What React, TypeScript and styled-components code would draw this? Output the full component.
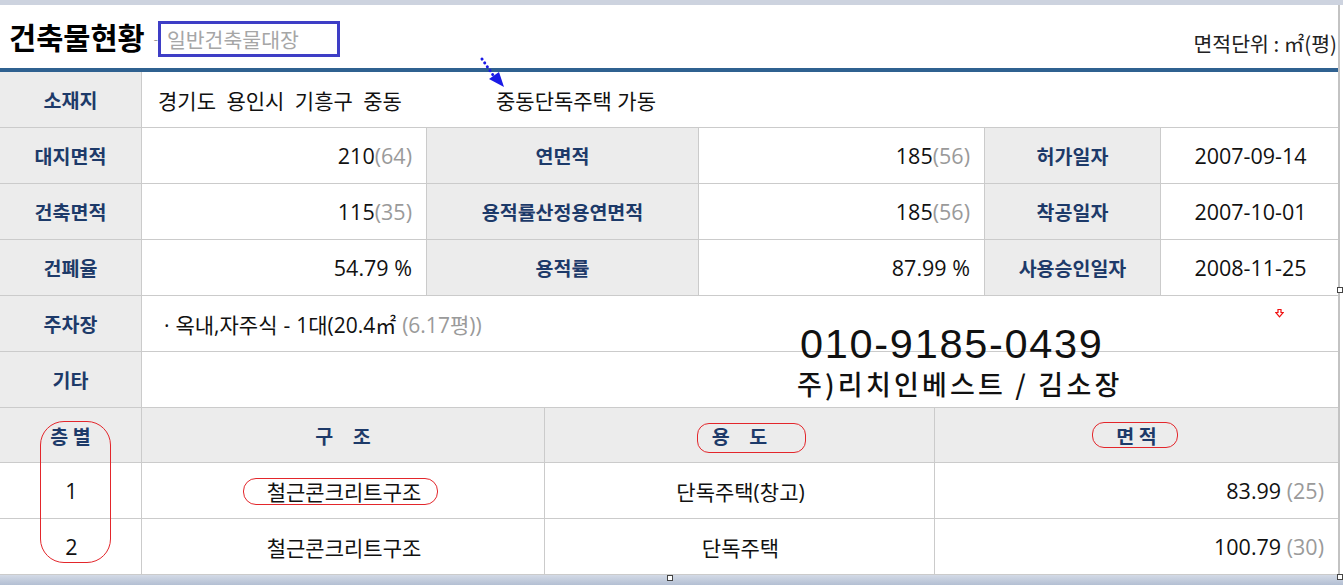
import React from 'react';
import styled, { createGlobalStyle } from 'styled-components';

const GlobalStyle = createGlobalStyle`
  html, body {
    margin: 0;
    padding: 0;
    background: #fff;
  }
  body {
    font-family: 'Open Sans', 'Noto Sans CJK KR', sans-serif;
    color: #111;
  }
  * {
    box-sizing: border-box;
  }
`;

const Page = styled.div`
  position: relative;
  width: 1343px;
  height: 585px;
  display: flex;
  flex-direction: column;
  overflow: hidden;
  background: #fff;
`;

const TopBand = styled.div`
  flex: none;
  height: 5px;
  background: #cdd3df;
`;

const Sheet = styled.div`
  flex: none;
  width: 1340px;
  border-right: 2px solid #c3c3c3;
`;

const Header = styled.header`
  height: 63px;
  display: flex;
  align-items: center;
  padding: 0 1px 0 9px;
`;

const Title = styled.h1`
  margin: 0;
  font-family: 'Noto Sans CJK KR', sans-serif;
  font-size: 29.5px;
  font-weight: 700;
  line-height: 1;
  color: #000;
`;

const Dash = styled.span`
  margin: 4px 0 0 9px;
  font-size: 13px;
  color: #999;
`;

const KindBox = styled.div`
  width: 182px;
  height: 36px;
  margin-top: 5px;
  display: flex;
  align-items: center;
  padding-left: 6px;
  border: 3px solid #3e3ec6;
  font-family: 'Noto Sans CJK KR', sans-serif;
  font-size: 20.5px;
  color: #a6a6a6;
`;

const Unit = styled.div`
  margin: 13px 0 0 auto;
  font-family: 'Noto Sans CJK KR', sans-serif;
  font-size: 20.5px;
  color: #222;
`;

const Rule = styled.div`
  height: 4px;
  background: #2f6190;
`;

const InfoGrid = styled.div`
  display: grid;
  grid-template-columns: 142px 285px 272px 286px 176px 1fr;
  grid-auto-rows: 56px;
`;

const FloorGrid = styled.div`
  display: grid;
  grid-template-columns: 142px 403px 390px 1fr;
  grid-template-rows: 55px 56px 56px;
`;

type CellProps = { $span?: number; $end?: boolean };

const Cell = styled.div<CellProps>`
  display: flex;
  align-items: center;
  min-width: 0;
  white-space: nowrap;
  border-bottom: 1px solid #cbcbcb;
  border-right: ${(p) => (p.$end ? 'none' : '1px solid #cbcbcb')};
  grid-column: ${(p) => (p.$span ? `span ${p.$span}` : 'auto')};
`;

const Label = styled(Cell)`
  justify-content: center;
  background: #ececec;
  font-family: 'Noto Sans CJK KR', sans-serif;
  font-size: 19.5px;
  font-weight: 700;
  color: #1d3a69;
`;

const Value = styled(Cell)<{ $align?: 'left' | 'right' | 'center'; $num?: boolean }>`
  justify-content: ${(p) =>
    p.$align === 'left' ? 'flex-start' : p.$align === 'right' ? 'flex-end' : 'center'};
  padding: 0 14px 0 16px;
  font-size: ${(p) => (p.$num ? '21.5px' : '21px')};
  color: #111;
`;

const Gray = styled.span`
  color: #9a9a9a;
`;

const Addr = styled.span`
  flex: none;
  width: 338px;
  word-spacing: 5px;
`;

const Parking = styled.span`
  word-spacing: 0.5px;
`;

const Overlay = styled.div<{ $x: number; $y: number }>`
  position: absolute;
  left: ${(p) => p.$x}px;
  top: ${(p) => p.$y}px;
  pointer-events: none;
`;

const Phone = styled(Overlay)`
  font-family: 'Liberation Sans', sans-serif;
  font-size: 41.5px;
  line-height: 1;
  letter-spacing: 1.7px;
  color: #111;
`;

const Company = styled(Overlay)`
  font-family: 'Noto Sans CJK KR', sans-serif;
  font-size: 27px;
  font-weight: 500;
  line-height: 1;
  letter-spacing: 3.2px;
  color: #111;
`;

const Ring = styled(Overlay)<{ $w: number; $h: number; $r: number }>`
  width: ${(p) => p.$w}px;
  height: ${(p) => p.$h}px;
  border: 1px solid #e3262b;
  border-radius: ${(p) => p.$r}px;
`;

const Handle = styled(Overlay)`
  width: 6px;
  height: 6px;
  background: #fff;
  border: 1px solid #444;
`;

const BottomBand = styled.div`
  flex: none;
  height: 10px;
  margin-top: auto;
  background: linear-gradient(#d3dae6, #b3bfd3);
`;

const pyeong = (v: string, p: string) => (
  <>
    {v}
    <Gray>({p})</Gray>
  </>
);

export default function App() {
  return (
    <Page>
      <GlobalStyle />
      <TopBand />
      <Sheet>
        <Header>
          <Title>건축물현황</Title>
          <Dash>-</Dash>
          <KindBox>일반건축물대장</KindBox>
          <Unit>면적단위 : ㎡(평)</Unit>
        </Header>
        <Rule />
        <InfoGrid>
          <Label>소재지</Label>
          <Value $span={5} $end $align="left">
            <Addr>경기도 용인시 기흥구 중동</Addr>
            <span>중동단독주택 가동</span>
          </Value>

          <Label>대지면적</Label>
          <Value $align="right" $num>{pyeong('210', '64')}</Value>
          <Label>연면적</Label>
          <Value $align="right" $num>{pyeong('185', '56')}</Value>
          <Label>허가일자</Label>
          <Value $end $num>2007-09-14</Value>

          <Label>건축면적</Label>
          <Value $align="right" $num>{pyeong('115', '35')}</Value>
          <Label>용적률산정용연면적</Label>
          <Value $align="right" $num>{pyeong('185', '56')}</Value>
          <Label>착공일자</Label>
          <Value $end $num>2007-10-01</Value>

          <Label>건폐율</Label>
          <Value $align="right" $num>54.79 %</Value>
          <Label>용적률</Label>
          <Value $align="right" $num>87.99 %</Value>
          <Label>사용승인일자</Label>
          <Value $end $num>2008-11-25</Value>

          <Label>주차장</Label>
          <Value $span={5} $end $align="left">
            <Parking>
              &nbsp;· 옥내,자주식 - 1대(20.4㎡ <Gray>(6.17평))</Gray>
            </Parking>
          </Value>

          <Label>기타</Label>
          <Value $span={5} $end $align="left" />
        </InfoGrid>
        <FloorGrid>
          <Label>층 별</Label>
          <Label>구　조</Label>
          <Label>용　도</Label>
          <Label $end>면 적</Label>

          <Value $num>1</Value>
          <Value>철근콘크리트구조</Value>
          <Value>단독주택(창고)</Value>
          <Value $end $align="right" $num>
            83.99&nbsp;<Gray>(25)</Gray>
          </Value>

          <Value $num>2</Value>
          <Value>철근콘크리트구조</Value>
          <Value>단독주택</Value>
          <Value $end $align="right" $num>
            100.79&nbsp;<Gray>(30)</Gray>
          </Value>
        </FloorGrid>
      </Sheet>
      <BottomBand />

      <Overlay $x={476} $y={54}>
        <svg width="32" height="36" viewBox="0 0 32 36">
          <line
            x1="6"
            y1="5"
            x2="17"
            y2="21"
            stroke="#1a1ae6"
            strokeWidth="3"
            strokeLinecap="round"
            strokeDasharray="0.1 4.6"
          />
          <polygon points="28,33 13,25 23,18" fill="#1a1ae6" />
        </svg>
      </Overlay>
      <Overlay $x={1275} $y={301}>
        <svg width="9" height="9" viewBox="0 0 9 9">
          <path d="M3 0.5h3v3h2.2L4.5 7.8 0.8 3.5H3z" fill="#fff" stroke="#f01010" strokeWidth="1.2" />
        </svg>
      </Overlay>

      <Phone $x={800} $y={323}>010-9185-0439</Phone>
      <Company $x={797} $y={370}>주)리치인베스트 / 김소장</Company>

      <Ring $x={40} $y={421} $w={71} $h={142} $r={24} />
      <Ring $x={243} $y={478} $w={195} $h={27} $r={13} />
      <Ring $x={697} $y={423} $w={109} $h={30} $r={12} />
      <Ring $x={1092} $y={422} $w={86} $h={26} $r={12} />

      <Handle $x={667} $y={575} />
      <Handle $x={1337} $y={287} />
      <Handle $x={1337} $y={574} />
    </Page>
  );
}
